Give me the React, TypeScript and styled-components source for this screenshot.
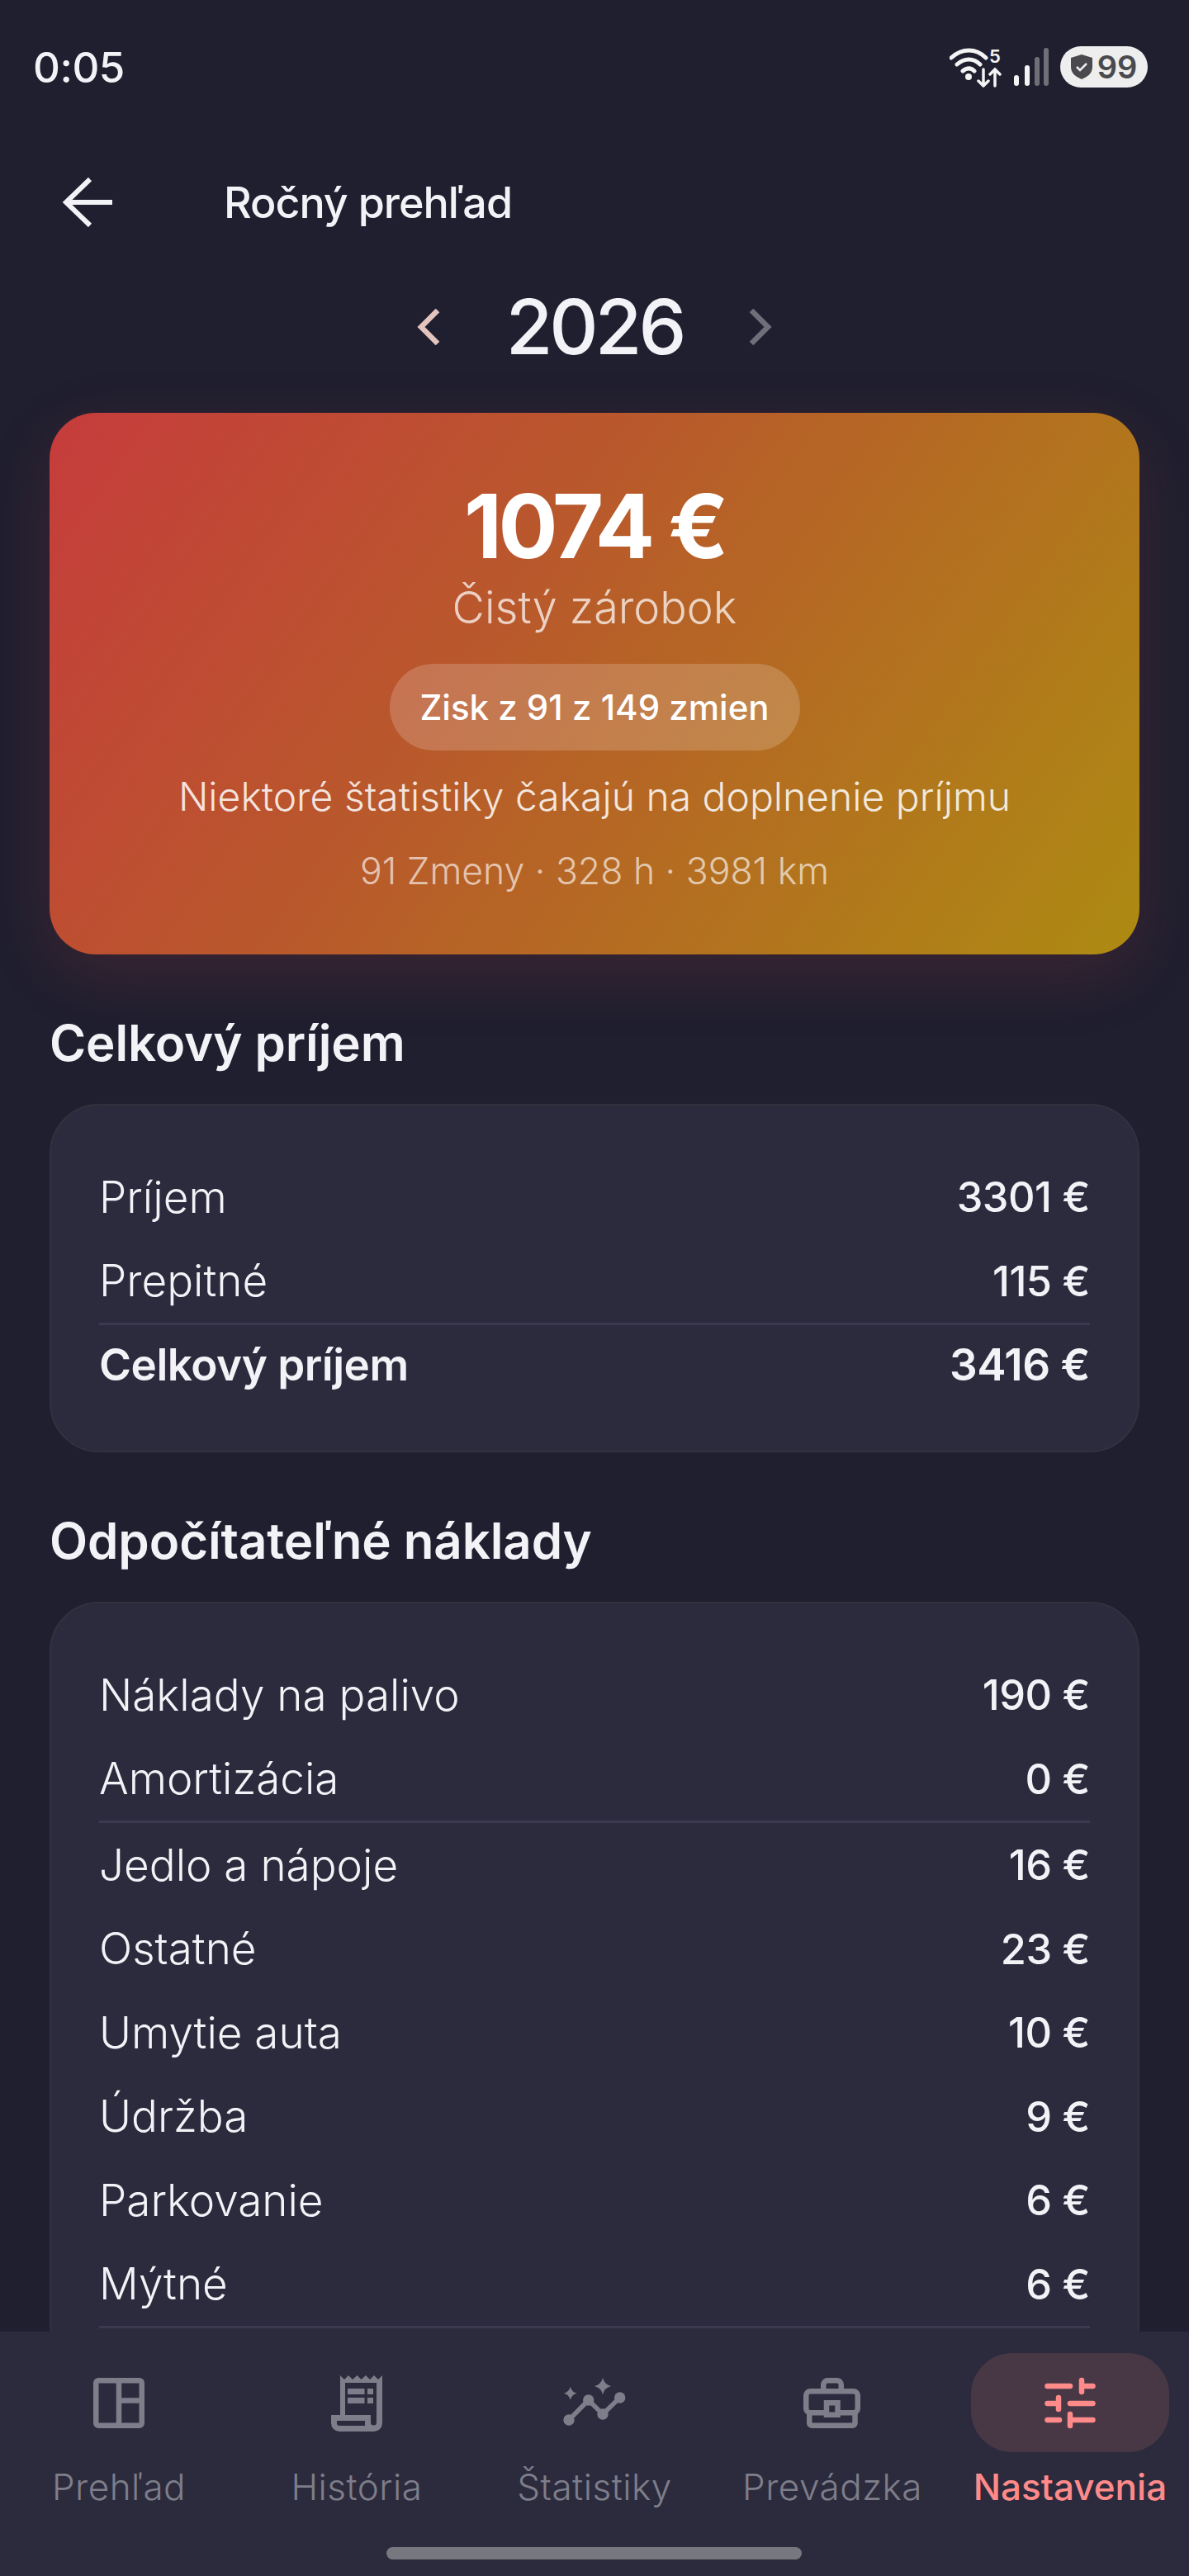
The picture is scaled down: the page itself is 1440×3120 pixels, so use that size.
import React from 'react';
import styled, { createGlobalStyle } from 'styled-components';

type Row = { label: string; value: string };

const incomeRows: Row[] = [
  { label: 'Príjem', value: '3301 €' },
  { label: 'Prepitné', value: '115 €' },
];

const costGroups: Row[][] = [
  [
    { label: 'Náklady na palivo', value: '190 €' },
    { label: 'Amortizácia', value: '0 €' },
  ],
  [
    { label: 'Jedlo a nápoje', value: '16 €' },
    { label: 'Ostatné', value: '23 €' },
    { label: 'Umytie auta', value: '10 €' },
    { label: 'Údržba', value: '9 €' },
    { label: 'Parkovanie', value: '6 €' },
    { label: 'Mýtné', value: '6 €' },
  ],
];

const GlobalStyle = createGlobalStyle`
  html, body {
    margin: 0;
    background: #1f1f2f;
  }
  * {
    box-sizing: border-box;
  }
`;

const Screen = styled.div`
  position: relative;
  width: 1440px;
  height: 3120px;
  overflow: hidden;
  background: #1f1f2f;
  color: #f2f2f7;
  font-family: Inter, 'Noto Sans', sans-serif;
`;

const StatusBar = styled.div`
  height: 160px;
  padding: 2px 50px 0 40px;
  display: flex;
  align-items: center;
  justify-content: space-between;
`;

const Clock = styled.span`
  font-size: 51px;
  font-weight: 500;
  letter-spacing: -0.5px;
`;

const StatusIcons = styled.div`
  display: flex;
  align-items: center;
  gap: 14px;
`;

const Battery = styled.div`
  width: 106px;
  height: 50px;
  border-radius: 25px;
  background: #eeeeee;
  color: #4a4a4e;
  display: flex;
  align-items: center;
  justify-content: center;
  gap: 6px;
  font-size: 38px;
  font-weight: 600;
`;

const TopBar = styled.div`
  height: 170px;
  padding: 0 0 0 75px;
  display: flex;
  align-items: center;
  gap: 135px;
`;

const Title = styled.h1`
  margin: 0;
  font-size: 52px;
  font-weight: 500;
  letter-spacing: -1px;
`;

const YearRow = styled.div`
  height: 132px;
  display: flex;
  align-items: center;
  justify-content: center;
  gap: 80px;
`;

const Year = styled.span`
  font-size: 92px;
  font-weight: 500;
  letter-spacing: -4px;
  line-height: 100px;
`;

const Content = styled.div`
  padding: 0 60px;
`;

const Hero = styled.section`
  margin-top: 38px;
  height: 656px;
  border-radius: 56px;
  background: linear-gradient(125deg, #c63c3c 0%, #b9582c 40%, #ad8b12 100%);
  box-shadow: 0 24px 80px rgba(220, 70, 70, 0.16);
  display: flex;
  flex-direction: column;
  align-items: center;
  padding-top: 70px;
`;

const Amount = styled.div`
  font-size: 107px;
  font-weight: 700;
  line-height: 134px;
  letter-spacing: -4.5px;
  color: #ffffff;
`;

const HeroLabel = styled.div`
  font-size: 54px;
  font-weight: 300;
  line-height: 64px;
  color: rgba(255, 255, 255, 0.72);
`;

const Pill = styled.div`
  margin-top: 36px;
  height: 105px;
  width: 497px;
  border-radius: 53px;
  background: rgba(255, 255, 255, 0.18);
  display: flex;
  align-items: center;
  justify-content: center;
  font-size: 42px;
  font-weight: 500;
  color: #ffffff;
`;

const HeroNote = styled.div`
  margin-top: 28px;
  font-size: 48px;
  font-weight: 300;
  line-height: 56px;
  color: rgba(255, 255, 255, 0.85);
`;

const HeroStats = styled.div`
  margin-top: 35px;
  font-size: 44.5px;
  font-weight: 300;
  line-height: 54px;
  color: rgba(255, 255, 255, 0.65);
`;

const SectionTitle = styled.h2`
  margin: 72px 0 39px;
  font-size: 60px;
  font-weight: 600;
  line-height: 70px;
  letter-spacing: -0.1px;
`;

const Card = styled.div`
  border-radius: 60px;
  background: #2c2b3d;
  border: 2px solid #32313f;
  padding: 60px 58px 57px;
`;

const RowLine = styled.div`
  height: 101.5px;
  display: flex;
  align-items: center;
  justify-content: space-between;
  font-size: 53px;
  font-weight: 300;
`;

const TotalRow = styled(RowLine)`
  height: 95px;
  font-weight: 600;
  letter-spacing: -0.5px;
`;

const Value = styled.span`
  font-weight: 500;
  font-size: 50.5px;
  letter-spacing: -0.5px;
`;

const Divider = styled.div`
  height: 3px;
  background: #3b3a4e;
`;

const BottomNav = styled.nav`
  position: absolute;
  left: 0;
  right: 0;
  bottom: 0;
  height: 296px;
  background: #2c2b3d;
  display: grid;
  grid-template-columns: repeat(5, 1fr);
  padding-top: 26px;
`;

const NavItem = styled.div<{ $active?: boolean }>`
  display: flex;
  flex-direction: column;
  align-items: center;
  color: ${(p) => (p.$active ? '#ff8a8a' : '#7e7e8b')};
`;

const NavIconWrap = styled.div<{ $active?: boolean }>`
  width: 240px;
  height: 120px;
  border-radius: 50px;
  display: flex;
  align-items: center;
  justify-content: center;
  background: ${(p) => (p.$active ? '#483846' : 'transparent')};
`;

const NavLabel = styled.span<{ $active?: boolean }>`
  margin-top: 12px;
  font-size: 44px;
  line-height: 60px;
  letter-spacing: ${(p) => (p.$active ? '0' : '0.5px')};
  font-weight: ${(p) => (p.$active ? 500 : 300)};
`;

const HomeBar = styled.div`
  position: absolute;
  left: 468px;
  bottom: 20px;
  width: 503px;
  height: 15px;
  border-radius: 8px;
  background: #77777f;
`;

const sparkle = (cx: number, cy: number, r: number) =>
  `M${cx} ${cy - r}Q${cx + r * 0.2} ${cy - r * 0.2} ${cx + r} ${cy}Q${cx + r * 0.2} ${cy + r * 0.2} ${cx} ${cy + r}Q${cx - r * 0.2} ${cy + r * 0.2} ${cx - r} ${cy}Q${cx - r * 0.2} ${cy - r * 0.2} ${cx} ${cy - r}Z`;

function NavIcon({ name }: { name: string }) {
  const common = { width: 80, height: 80, viewBox: '0 0 80 80', fill: 'none' as const };
  switch (name) {
    case 'dash':
      return (
        <svg {...common} stroke="currentColor" strokeWidth="6.5">
          <rect x="12.25" y="13.25" width="55.5" height="54.5" rx="3" />
          <path d="M40 13v55M40 37.5h28" />
        </svg>
      );
    case 'receipt':
      return (
        <svg {...common}>
          <path
            fill="currentColor"
            fillRule="evenodd"
            d="M20 7L25 12 30 7 35 12 40.5 7 45.5 12 51 7 56 12 61 7 66 12 71 7V65a10 10 0 0 1-10 10H19a10 10 0 0 1-10-10V55H20ZM26 16V55H57V64a3.5 3.5 0 0 0 7 0V16ZM16 62V65a3 3 0 0 0 3 3H50V62Z"
          />
          <path fill="currentColor" d="M29 23h20.5v7H29zM53 23h7v7h-7zM29 34h20.5v7H29zM53 34h7v7h-7z" />
        </svg>
      );
    case 'stats':
      return (
        <svg {...common}>
          <path stroke="currentColor" strokeWidth="5.5" strokeLinejoin="round" d="M9 61L32.7 37 50 54 70.7 34" />
          <circle cx="9" cy="61" r="6.7" fill="currentColor" />
          <circle cx="32.7" cy="37" r="6.7" fill="currentColor" />
          <circle cx="50" cy="54" r="6.7" fill="currentColor" />
          <circle cx="70.7" cy="34" r="6.7" fill="currentColor" />
          <path fill="currentColor" d={`${sparkle(50, 20, 10)}${sparkle(10.7, 28.7, 8)}`} />
        </svg>
      );
    case 'case':
      return (
        <svg {...common} stroke="currentColor" strokeWidth="6.5">
          <path d="M29.25 24v-5.75a5 5 0 0 1 5-5h11.5a5 5 0 0 1 5 5V24" />
          <rect x="8.25" y="26.25" width="62.5" height="26" rx="5" />
          <path d="M12.25 52v12.75a3 3 0 0 0 3 3h49.25a3 3 0 0 0 3-3V52" />
          <rect x="33" y="40.25" width="13.5" height="14.5" fill="#2c2b3d" />
        </svg>
      );
    default:
      return (
        <svg {...common} stroke="currentColor" strokeWidth="6.5" strokeLinecap="round">
          <path d="M12.5 20H40M54 13v14M54 20H67.5M12.5 41H26M26 34v14M40 41H67.5M12.5 61H27M40 54v14M40 61H67.5" />
        </svg>
      );
  }
}

const navItems = [
  { icon: 'dash', label: 'Prehľad' },
  { icon: 'receipt', label: 'História' },
  { icon: 'stats', label: 'Štatistiky' },
  { icon: 'case', label: 'Prevádzka' },
  { icon: 'tune', label: 'Nastavenia', active: true },
];

function Lines({ rows }: { rows: Row[] }) {
  return (
    <>
      {rows.map((row) => (
        <RowLine key={row.label}>
          <span>{row.label}</span>
          <Value>{row.value}</Value>
        </RowLine>
      ))}
    </>
  );
}

export default function App() {
  return (
    <Screen>
      <GlobalStyle />
      <StatusBar>
        <Clock>0:05</Clock>
        <StatusIcons>
          <svg width="64" height="50" viewBox="0 0 64 50" fill="none" stroke="#f4f4f4" strokeLinecap="round">
            <path strokeWidth="5" d="M2 14c13-12 30-12 42 0M9 22c9-8 20-8 28 0M16 30c5-4 10-4 14 0" />
            <circle cx="23" cy="37" r="4" fill="#f4f4f4" stroke="none" />
            <path strokeWidth="3.5" d="M41 28v20M35 42l6 6 6-6M55 48V28M49 34l6-6 6 6" />
            <text x="48" y="20" fontSize="22" fontWeight="600" fill="#f4f4f4" stroke="none" fontFamily="Inter">5</text>
          </svg>
          <svg width="42" height="46" viewBox="0 0 42 46" strokeLinecap="round" strokeWidth="6">
            <path stroke="#f4f4f4" d="M3 36v7M16 24v19" />
            <path stroke="#6f6f78" d="M28 14v29M39 3v40" />
          </svg>
          <Battery>
            <svg width="26" height="30" viewBox="0 0 26 30">
              <path fill="#4a4a4e" d="M13 0l13 4v11c0 8-6 12-13 15C6 27 0 23 0 15V4z" />
              <path fill="none" stroke="#eeeeee" strokeWidth="2.5" d="M7 15l4 4 8-8" />
            </svg>
            99
          </Battery>
        </StatusIcons>
      </StatusBar>

      <TopBar>
        <svg width="61" height="60" viewBox="0 0 61 60" fill="none" stroke="#f2f2f7" strokeWidth="6">
          <path d="M61 30H6M34 2L5 30l29 28" />
        </svg>
        <Title>Ročný prehľad</Title>
      </TopBar>

      <YearRow>
        <svg width="28" height="44" viewBox="0 0 28 44" fill="none" stroke="#e4c4be" strokeWidth="6.5">
          <path d="M25 2L5 22l20 20" />
        </svg>
        <Year>2026</Year>
        <svg width="28" height="44" viewBox="0 0 28 44" fill="none" stroke="#6f6f7a" strokeWidth="6.5">
          <path d="M3 2l20 20L3 42" />
        </svg>
      </YearRow>

      <Content>
        <Hero>
          <Amount>1074 €</Amount>
          <HeroLabel>Čistý zárobok</HeroLabel>
          <Pill>Zisk z 91 z 149 zmien</Pill>
          <HeroNote>Niektoré štatistiky čakajú na doplnenie príjmu</HeroNote>
          <HeroStats>91 Zmeny · 328 h · 3981 km</HeroStats>
        </Hero>

        <SectionTitle>Celkový príjem</SectionTitle>
        <Card>
          <Lines rows={incomeRows} />
          <Divider />
          <TotalRow>
            <span>Celkový príjem</span>
            <span>3416 €</span>
          </TotalRow>
        </Card>

        <SectionTitle>Odpočítateľné náklady</SectionTitle>
        <Card>
          <Lines rows={costGroups[0]} />
          <Divider />
          <Lines rows={costGroups[1]} />
          <Divider />
        </Card>
      </Content>

      <BottomNav>
        {navItems.map((item) => (
          <NavItem key={item.label} $active={item.active}>
            <NavIconWrap $active={item.active}>
              <NavIcon name={item.icon} />
            </NavIconWrap>
            <NavLabel $active={item.active}>{item.label}</NavLabel>
          </NavItem>
        ))}
      </BottomNav>
      <HomeBar />
    </Screen>
  );
}
